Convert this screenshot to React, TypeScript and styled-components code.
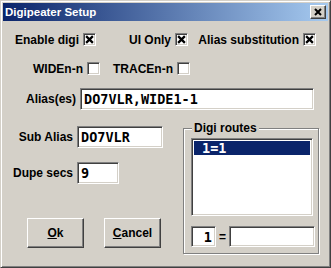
import React, { useState } from 'react'
import styled, { createGlobalStyle } from 'styled-components'

const GlobalStyle = createGlobalStyle`
    html, body {
        margin:0;
        padding:0;
        background:#d4d0c8;
    }
    body{
        font-family:"Liberation Sans", Arial, sans-serif;
        font-size:12px;
        font-weight:bold;
        color:#000;
    }
`

const CrossMark = ({ size }: { size: number }) => (
    <svg width={size} height={size} viewBox="0 0 8 8">
        <path d="M1 1 L7 7 M7 1 L1 7" stroke="#000" strokeWidth="2" fill="none" />
    </svg>
)

const CheckItem = ({ label, width, checked, onToggle }:
    { label: string, width: number, checked: boolean, onToggle: () => void }) => (
    <CheckLabel $width={width} onClick={onToggle}>
        <span>{label}</span>
        <CheckBox>{checked && <CrossMark size={9} />}</CheckBox>
    </CheckLabel>
)

const App = () => {
    const [enableDigi, setEnableDigi] = useState(true);
    const [uiOnly, setUiOnly] = useState(true);
    const [aliasSub, setAliasSub] = useState(true);
    const [wide, setWide] = useState(false);
    const [trace, setTrace] = useState(false);
    const [aliases, setAliases] = useState('DO7VLR,WIDE1-1');
    const [subAlias, setSubAlias] = useState('DO7VLR');
    const [dupeSecs, setDupeSecs] = useState('9');
    const [routeFrom, setRouteFrom] = useState('1');
    const [routeTo, setRouteTo] = useState('');

    return (
        <>
            <GlobalStyle />
            <Window>
                <TitleBar>
                    <span>Digipeater Setup</span>
                    <CloseButton><CrossMark size={8} /></CloseButton>
                </TitleBar>
                <Body>
                    <CheckRow $top={12} $left={12}>
                        <CheckItem label="Enable digi" width={81} checked={enableDigi} onToggle={() => setEnableDigi(!enableDigi)} />
                        <Spacer $w={33} />
                        <CheckItem label="UI Only" width={59} checked={uiOnly} onToggle={() => setUiOnly(!uiOnly)} />
                        <Spacer $w={15} />
                        <CheckItem label="Alias substitution" width={113} checked={aliasSub} onToggle={() => setAliasSub(!aliasSub)} />
                    </CheckRow>
                    <CheckRow $top={16} $left={24}>
                        <CheckItem label="WIDEn-n" width={73} checked={wide} onToggle={() => setWide(!wide)} />
                        <Spacer $w={15} />
                        <CheckItem label="TRACEn-n" width={75} checked={trace} onToggle={() => setTrace(!trace)} />
                    </CheckRow>
                    <FieldRow $top={13}>
                        <FieldLabel $width={77}>Alias(es)</FieldLabel>
                        <TextInput $width={234} value={aliases} onChange={(e) => setAliases(e.target.value)} />
                    </FieldRow>
                    <Lower>
                        <LeftColumn>
                            <FieldRow $top={0}>
                                <FieldLabel $width={74}>Sub Alias</FieldLabel>
                                <TextInput $width={86} value={subAlias} onChange={(e) => setSubAlias(e.target.value)} />
                            </FieldRow>
                            <FieldRow $top={14}>
                                <FieldLabel $width={74}>Dupe secs</FieldLabel>
                                <TextInput $width={42} value={dupeSecs} onChange={(e) => setDupeSecs(e.target.value)} />
                            </FieldRow>
                            <ButtonRow>
                                <Button><u>O</u>k</Button>
                                <Button><u>C</u>ancel</Button>
                            </ButtonRow>
                        </LeftColumn>
                        <GroupBox>
                            <Legend>Digi routes</Legend>
                            <ListBox>
                                <ListItem $selected>1=1</ListItem>
                            </ListBox>
                            <RouteRow>
                                <TextInput $width={25} $align="right" value={routeFrom} onChange={(e) => setRouteFrom(e.target.value)} />
                                <span>=</span>
                                <TextInput $width={86} value={routeTo} onChange={(e) => setRouteTo(e.target.value)} />
                            </RouteRow>
                        </GroupBox>
                    </Lower>
                </Body>
            </Window>
        </>
    )
}

export default App

const Window = styled.div`
    box-sizing:border-box;
    width:331px;
    height:268px;
    padding:2px;
    background:#d4d0c8;
    border:1px solid;
    border-color:#d4d0c8 #404040 #404040 #d4d0c8;
    box-shadow:inset 1px 1px 0 #fff, inset -1px -1px 0 #808080;
    display:flex;
    flex-direction:column;
`

const TitleBar = styled.div`
    height:18px;
    display:flex;
    align-items:center;
    justify-content:space-between;
    padding:0 2px 0 2px;
    background:linear-gradient(to right, #0a246a, #a6caf0);
    color:#fff;
    font-size:11.5px;
`

const CloseButton = styled.div`
    box-sizing:border-box;
    width:16px;
    height:14px;
    background:#d4d0c8;
    border:1px solid;
    border-color:#fff #404040 #404040 #fff;
    box-shadow:inset -1px -1px 0 #808080;
    display:flex;
    align-items:center;
    justify-content:center;
`

const Body = styled.div`
    display:flex;
    flex-direction:column;
`

const CheckRow = styled.div<{ $top: number, $left: number }>`
    display:flex;
    align-items:center;
    height:13px;
    margin-top:${p => p.$top}px;
    margin-left:${p => p.$left}px;
`

const Spacer = styled.div<{ $w: number }>`
    width:${p => p.$w}px;
    flex:none;
`

const CheckLabel = styled.label<{ $width: number }>`
    display:flex;
    align-items:center;
    justify-content:flex-end;
    gap:4px;
    width:${p => p.$width}px;
    white-space:nowrap;
    cursor:default;
`

const CheckBox = styled.span`
    box-sizing:border-box;
    width:13px;
    height:13px;
    flex:none;
    background:#fff;
    border:1px solid;
    border-color:#808080 #fff #fff #808080;
    box-shadow:inset 1px 1px 0 #404040, inset -1px -1px 0 #d4d0c8;
    display:flex;
    align-items:center;
    justify-content:center;
`

const FieldRow = styled.div<{ $top: number }>`
    display:flex;
    align-items:center;
    margin-top:${p => p.$top}px;
`

const FieldLabel = styled.div<{ $width: number }>`
    width:${p => p.$width}px;
    text-align:right;
    padding-right:4px;
    box-sizing:border-box;
    flex:none;
    white-space:nowrap;
`

const TextInput = styled.input<{ $width: number, $align?: string }>`
    box-sizing:border-box;
    width:${p => p.$width}px;
    height:22px;
    padding:0 3px;
    margin:0;
    background:#fff;
    border:1px solid;
    border-color:#808080 #fff #fff #808080;
    box-shadow:inset 1px 1px 0 #404040, inset -1px -1px 0 #d4d0c8;
    font-family:"DejaVu Sans Mono", monospace;
    font-weight:bold;
    font-size:13.5px;
    text-align:${p => p.$align || 'left'};
    outline:none;
`

const Lower = styled.div`
    display:flex;
    align-items:flex-start;
    margin-top:16px;
`

const LeftColumn = styled.div`
    width:180px;
    flex:none;
    display:flex;
    flex-direction:column;
`

const ButtonRow = styled.div`
    display:flex;
    gap:20px;
    margin-top:34px;
    margin-left:24px;
`

const Button = styled.button`
    box-sizing:border-box;
    width:57px;
    height:30px;
    margin:0;
    padding:0;
    background:#d4d0c8;
    border:1px solid;
    border-color:#fff #404040 #404040 #fff;
    box-shadow:inset -1px -1px 0 #808080;
    font-family:"Liberation Sans", Arial, sans-serif;
    font-weight:bold;
    font-size:12px;
    color:#000;
`

const GroupBox = styled.div`
    box-sizing:border-box;
    width:136px;
    margin-top:2px;
    padding:0 5px 6px 7px;
    border:1px solid #808080;
    box-shadow:inset 1px 1px 0 #fff, 1px 1px 0 #fff;
    display:flex;
    flex-direction:column;
`

const Legend = styled.div`
    align-self:flex-start;
    margin:-7px 0 0 1px;
    padding:0 2px;
    line-height:13px;
    background:#d4d0c8;
`

const ListBox = styled.div`
    box-sizing:border-box;
    height:78px;
    margin-top:3px;
    padding:2px 2px;
    background:#fff;
    border:1px solid;
    border-color:#808080 #fff #fff #808080;
    box-shadow:inset 1px 1px 0 #404040, inset -1px -1px 0 #d4d0c8;
`

const ListItem = styled.div<{ $selected?: boolean }>`
    height:14px;
    line-height:14px;
    padding-left:8px;
    font-family:"DejaVu Sans Mono", monospace;
    font-weight:bold;
    font-size:13.5px;
    background:${p => p.$selected ? '#0a246a' : 'transparent'};
    color:${p => p.$selected ? '#fff' : '#000'};
`

const RouteRow = styled.div`
    display:flex;
    align-items:center;
    gap:3px;
    margin-top:10px;
    font-size:12px;
    input{
        height:21px;
    }
`
